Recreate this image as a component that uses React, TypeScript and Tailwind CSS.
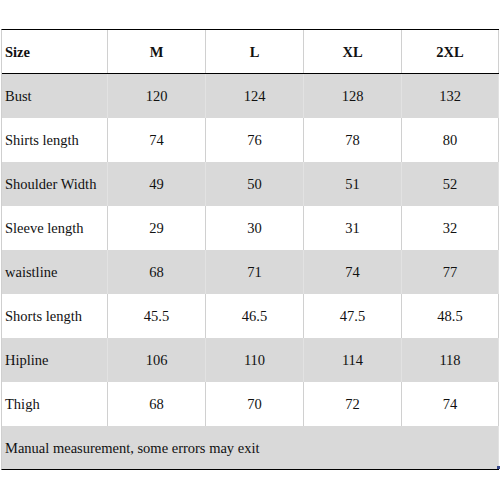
import React from "react";

const sizes = ["M", "L", "XL", "2XL"];

const rows: { name: string; values: string[] }[] = [
  { name: "Bust", values: ["120", "124", "128", "132"] },
  { name: "Shirts length", values: ["74", "76", "78", "80"] },
  { name: "Shoulder Width", values: ["49", "50", "51", "52"] },
  { name: "Sleeve length", values: ["29", "30", "31", "32"] },
  { name: "waistline", values: ["68", "71", "74", "77"] },
  { name: "Shorts length", values: ["45.5", "46.5", "47.5", "48.5"] },
  { name: "Hipline", values: ["106", "110", "114", "118"] },
  { name: "Thigh", values: ["68", "70", "72", "74"] },
];

const cols = "grid grid-cols-[106px_98px_98px_98px_97px]";

const App: React.FC = () => {
  return (
    <div className="w-[500px] h-[500px] bg-white pt-[29px] text-[14.5px] text-[#111] font-['Liberation_Serif','Times_New_Roman',serif]">
      <div className="relative ml-px w-[498px] border-l border-[#cfcfcf] border-t border-t-black border-b border-b-black">
        {/* Header */}
        <div className={`${cols} h-[44px] border-b border-black`}>
          <div className="flex items-center pl-[3px] pt-[2px] font-bold border-r border-[#d0d0d0]">
            Size
          </div>
          {sizes.map((s) => (
            <div
              key={s}
              className="flex items-center justify-center pt-[2px] font-bold border-r border-[#d0d0d0]"
            >
              {s}
            </div>
          ))}
        </div>

        {/* Body */}
        {rows.map((row, idx) => {
          const gray = idx % 2 === 0;
          const line = gray ? "border-[#e2e2e2]" : "border-[#d0d0d0]";
          return (
            <div
              key={row.name}
              className={`${cols} h-[44px] ${gray ? "bg-[#d9d9d9]" : "bg-white"}`}
            >
              <div className={`flex items-center pl-[3px] pt-[2px] border-r ${line}`}>
                {row.name}
              </div>
              {row.values.map((v, i) => (
                <div
                  key={i}
                  className={`flex items-center justify-center pt-[2px] border-r ${line}`}
                >
                  {v}
                </div>
              ))}
            </div>
          );
        })}

        {/* Footer note */}
        <div className="h-[43px] bg-[#d9d9d9] flex items-center pl-[3px] pt-[2px] border-r border-[#e2e2e2]">
          Manual measurement, some errors may exit
        </div>

        <div className="absolute right-[-1px] bottom-0 w-[3px] h-[3px] bg-[#3a4a8a]" />
      </div>
    </div>
  );
};

export default App;
